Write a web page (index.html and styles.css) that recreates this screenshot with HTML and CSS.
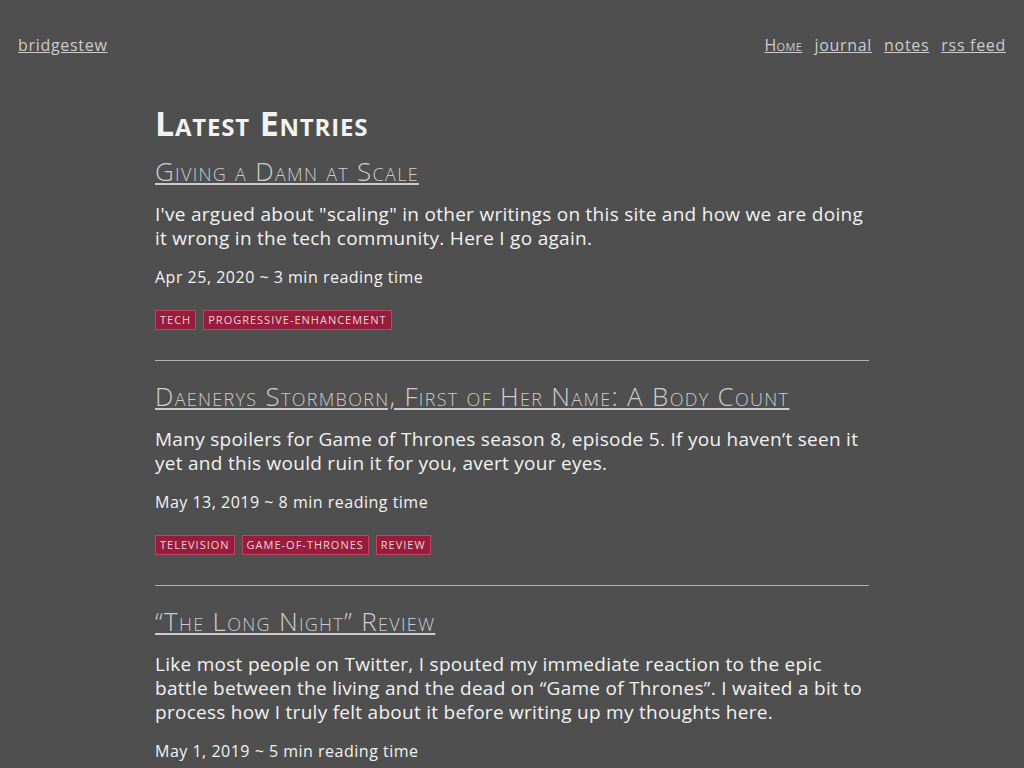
FILE: index.html
```html
<!DOCTYPE html>
<html lang="en">
<head>
<meta charset="utf-8">
<title>bridgestew</title>
<link rel="stylesheet" href="styles.css">
</head>
<body>
<header class="site-header">
  <a class="brand" href="#">bridgestew</a>
  <nav class="nav">
    <a class="nav-home" href="#">Home</a>
    <a href="#">journal</a>
    <a href="#">notes</a>
    <a href="#">rss feed</a>
  </nav>
</header>
<main class="content">
  <h1 class="page-title">Latest Entries</h1>
  <article class="entry">
    <h2 class="entry-title"><a href="#">Giving a Damn at Scale</a></h2>
    <p class="entry-summary">I've argued about "scaling" in other writings on this site and how we are doing it wrong in the tech community. Here I go again.</p>
    <p class="entry-meta">Apr 25, 2020 ~ 3 min reading time</p>
    <ul class="tags">
      <li class="tag">tech</li>
      <li class="tag">progressive-enhancement</li>
    </ul>
  </article>
  <hr class="divider">
  <article class="entry">
    <h2 class="entry-title"><a href="#">Daenerys Stormborn, First of Her Name: A Body Count</a></h2>
    <p class="entry-summary">Many spoilers for Game of Thrones season 8, episode 5. If you haven’t seen it yet and this would ruin it for you, avert your eyes.</p>
    <p class="entry-meta">May 13, 2019 ~ 8 min reading time</p>
    <ul class="tags">
      <li class="tag">television</li>
      <li class="tag">game-of-thrones</li>
      <li class="tag">review</li>
    </ul>
  </article>
  <hr class="divider">
  <article class="entry">
    <h2 class="entry-title"><a href="#">“The Long Night” Review</a></h2>
    <p class="entry-summary">Like most people on Twitter, I spouted my immediate reaction to the epic battle between the living and the dead on “Game of Thrones”. I waited a bit to process how I truly felt about it before writing up my thoughts here.</p>
    <p class="entry-meta">May 1, 2019 ~ 5 min reading time</p>
  </article>
</main>
</body>
</html>
```
FILE: styles.css
```css
html, body {
  margin: 0;
  padding: 0;
}
body {
  background: #4f4f4f;
  color: #f2f2f2;
  font-family: "Open Sans", "DejaVu Sans", sans-serif;
  font-size: 19px;
  line-height: 24px;
  letter-spacing: 0.28px;
}
a {
  color: #cccccc;
}
.site-header {
  display: flex;
  justify-content: space-between;
  align-items: baseline;
  padding: 34px 18px 0 18px;
  font-size: 16px;
  line-height: 22px;
  letter-spacing: 0.7px;
}
.nav {
  display: flex;
  gap: 12px;
}
.nav-home {
  font-variant: small-caps;
  letter-spacing: 0.4px;
}
.content {
  width: 714px;
  margin: 0 auto;
  padding-top: 47px;
}
.page-title {
  margin: 0;
  font-size: 34px;
  line-height: 40px;
  font-weight: 700;
  letter-spacing: 0.8px;
  font-variant: small-caps;
}
.entry-title {
  margin: 12px 0 0;
  font-size: 26px;
  line-height: 32px;
  font-weight: 300;
  letter-spacing: 1.3px;
  font-variant: small-caps;
}
.divider + .entry .entry-title {
  margin-top: 19px;
}
.entry-summary {
  margin: 15px 0 0;
}
.entry-meta {
  margin: 15px 0 0;
  font-size: 16px;
  letter-spacing: 0.5px;
}
.tags {
  list-style: none;
  display: flex;
  gap: 7px;
  margin: 21px 0 0;
  padding: 0;
}
.tag {
  background: #981d3c;
  border: 1px solid #b9475f;
  color: #ecd0d8;
  font-size: 11px;
  line-height: 18px;
  padding: 0 4px;
  text-transform: uppercase;
  letter-spacing: 1px;
}
.divider {
  border: 0;
  border-top: 1px solid #b0b0b0;
  margin: 30px 0 0;
}
```
